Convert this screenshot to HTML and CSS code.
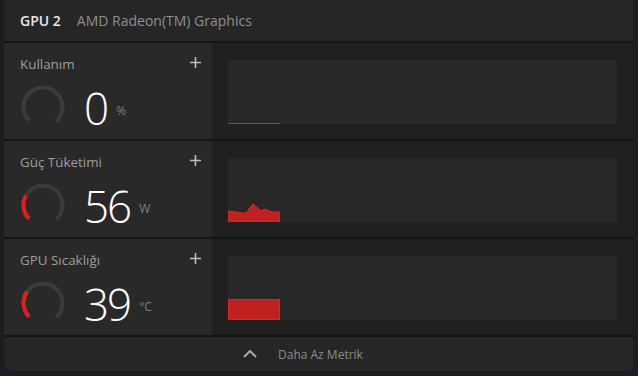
FILE: index.html
```html
<!DOCTYPE html>
<html lang="tr">
<head>
    <meta charset="UTF-8">
    <meta name="viewport" content="width=device-width, initial-scale=1.0">
    <title>GPU 2 - Metrikler</title>
    <link rel="stylesheet" href="styles.css">
</head>
<body>

    <div class="panel">
        <div class="panel-header">
            <span class="gpu-id">GPU 2</span>
            <span class="gpu-name">AMD Radeon(TM) Graphics</span>
        </div>

        <!-- Kullanim -->
        <div class="metric">
            <div class="metric-info">
                <div class="metric-top">
                    <span class="metric-label">Kullanım</span>
                    <svg class="plus" width="11" height="11" viewBox="0 0 11 11"><path d="M5.5 0V11M0 5.5H11"/></svg>
                </div>
                <div class="metric-value">
                    <svg class="gauge" width="44" height="44" viewBox="0 0 44 44">
                        <circle class="gauge-track" cx="22" cy="22" r="19.5"/>
                    </svg>
                    <span class="value">0</span>
                    <span class="unit">%</span>
                </div>
            </div>
            <div class="metric-chart">
                <svg class="chart" width="389" height="64" viewBox="0 0 389 64">
                    <line class="chart-line" x1="0" y1="63.5" x2="52" y2="63.5"/>
                </svg>
            </div>
        </div>

        <!-- Guc Tuketimi -->
        <div class="metric">
            <div class="metric-info">
                <div class="metric-top">
                    <span class="metric-label">Güç Tüketimi</span>
                    <svg class="plus" width="11" height="11" viewBox="0 0 11 11"><path d="M5.5 0V11M0 5.5H11"/></svg>
                </div>
                <div class="metric-value">
                    <svg class="gauge" width="44" height="44" viewBox="0 0 44 44">
                        <circle class="gauge-track" cx="22" cy="22" r="19.5"/>
                        <circle class="gauge-fill" cx="22" cy="22" r="19.5" style="stroke-dasharray: 25 200"/>
                    </svg>
                    <span class="value">56</span>
                    <span class="unit">W</span>
                </div>
            </div>
            <div class="metric-chart">
                <svg class="chart" width="389" height="64" viewBox="0 0 389 64">
                    <polygon class="chart-area" points="0.5,53 15,55 18,55 25,46 33,53 37,51 44,54 51.5,54 51.5,63.5 0.5,63.5"/>
                </svg>
            </div>
        </div>

        <!-- GPU Sicakligi -->
        <div class="metric">
            <div class="metric-info">
                <div class="metric-top">
                    <span class="metric-label">GPU Sıcaklığı</span>
                    <svg class="plus" width="11" height="11" viewBox="0 0 11 11"><path d="M5.5 0V11M0 5.5H11"/></svg>
                </div>
                <div class="metric-value">
                    <svg class="gauge" width="44" height="44" viewBox="0 0 44 44">
                        <circle class="gauge-track" cx="22" cy="22" r="19.5"/>
                        <circle class="gauge-fill" cx="22" cy="22" r="19.5" style="stroke-dasharray: 27 200"/>
                    </svg>
                    <span class="value">39</span>
                    <span class="unit">°C</span>
                </div>
            </div>
            <div class="metric-chart">
                <svg class="chart" width="389" height="64" viewBox="0 0 389 64">
                    <rect class="chart-area" x="0.5" y="43.5" width="51" height="20"/>
                </svg>
            </div>
        </div>

        <div class="panel-footer">
            <svg class="chevron" width="14" height="8" viewBox="0 0 14 8"><path d="M1 7L7 1L13 7"/></svg>
            <span>Daha Az Metrik</span>
        </div>
    </div>

</body>
</html>
```

FILE: styles.css
```css
body {
    margin: 0;
    background-color: #1a1e23;
    font-family: "Open Sans", "Noto Sans", sans-serif;
}

.panel {
    display: flex;
    flex-direction: column;
    gap: 2px;
    width: 629px;
    height: 371px;
    margin-left: 4px;
    background-color: #121519;
    border-radius: 0 0 6px 6px;
    overflow: hidden;
}

.panel-header {
    display: flex;
    align-items: center;
    gap: 16px;
    height: 41px;
    padding: 0 16px;
    background-color: #262626;
    font-size: 14px;
}

.gpu-id {
    color: #e8e8e8;
    font-weight: 600;
}

.gpu-name {
    color: #8f8f8f;
}

/* Metric rows */
.metric {
    display: grid;
    grid-template-columns: 208px 1fr;
    height: 96px;
}

.metric-info {
    background-color: #292929;
    padding: 12px 11px 0 16px;
}

.metric-top {
    display: flex;
    justify-content: space-between;
    align-items: center;
    height: 18px;
}

.metric-label {
    font-size: 13.4px;
    line-height: 18px;
    color: #9e9e9e;
}

.plus {
    margin-top: -4px;
}

.plus path {
    stroke: #bdbdbd;
    stroke-width: 1.6;
}

.metric-value {
    display: flex;
    align-items: center;
    margin-top: 11px;
}

.gauge {
    margin-left: 1px;
}

.gauge circle {
    fill: none;
    stroke-width: 4;
    transform: rotate(135deg);
    transform-origin: 22px 22px;
}

.gauge-track {
    stroke: #3b3b3b;
    stroke-dasharray: 92 200;
}

.gauge-fill {
    stroke: #e51c1c;
}

.value {
    margin: 2px 0 0 19px;
    font-size: 44px;
    font-weight: 300;
    line-height: 44px;
    letter-spacing: -2px;
    color: #ffffff;
}

.unit {
    margin: 6px 0 0 9px;
    font-size: 12px;
    color: #7e7e7e;
}

.metric-chart {
    padding: 17px 16px 0;
    background-color: #202020;
}

.chart {
    display: block;
    background-color: #282828;
}

.chart-line {
    stroke: #c42a2a;
    stroke-width: 1;
}

.chart-area {
    fill: #c12020;
    stroke: #e82222;
    stroke-width: 1;
}

/* Footer */
.panel-footer {
    display: flex;
    align-items: center;
    gap: 21px;
    flex: 1;
    padding-left: 239px;
    background-color: #262626;
    font-size: 12px;
    color: #8c8c8c;
}

.chevron path {
    fill: none;
    stroke: #a8a8a8;
    stroke-width: 2;
}
```
